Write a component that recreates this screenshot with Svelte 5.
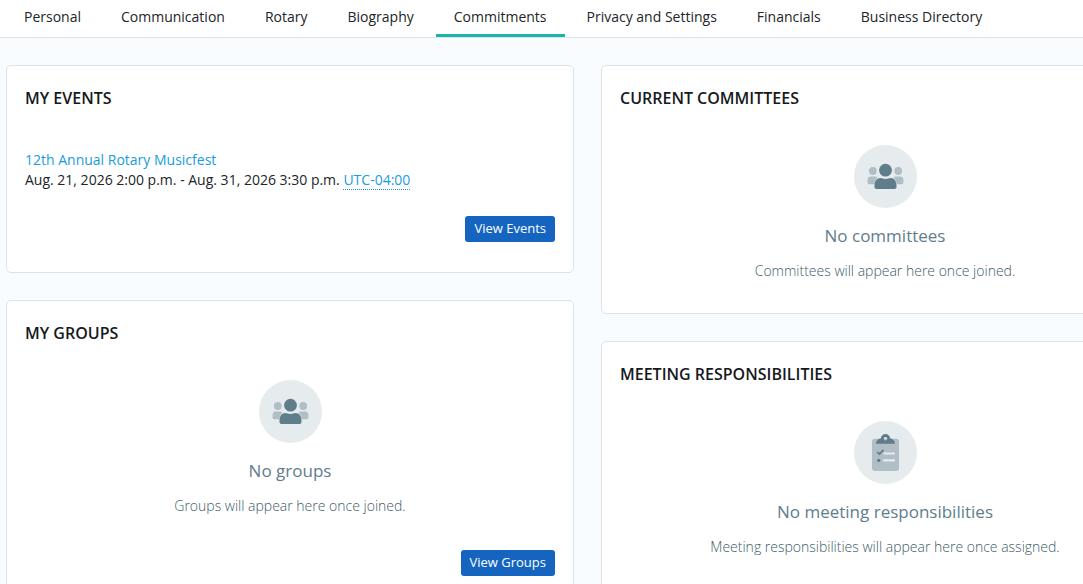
<script>
  const tabs = [
    'Personal',
    'Communication',
    'Rotary',
    'Biography',
    'Commitments',
    'Privacy and Settings',
    'Financials',
    'Business Directory'
  ];

  let activeTab = $state('Commitments');

  const events = [
    {
      id: 1,
      name: '12th Annual Rotary Musicfest',
      dates: 'Aug. 21, 2026 2:00 p.m. - Aug. 31, 2026 3:30 p.m.',
      zone: 'UTC-04:00'
    }
  ];
</script>

{#snippet groupIcon()}
  <svg class="icon" viewBox="0 0 63 63" aria-hidden="true">
    <circle cx="31.5" cy="31.5" r="31.5" fill="#e6ebed" />
    <g fill="#b0bec5">
      <circle cx="18.8" cy="26" r="3.9" />
      <circle cx="44.2" cy="26" r="3.9" />
      <path d="M16.5 31.6h4.6c.9 0 1.7.3 2.4.9-1.7 1.6-2.8 3.9-3.2 6.7h-5.3c-.8 0-1.4-.6-1.4-1.4v-2.7c0-2.1 1-3.5 2.9-3.5z" />
      <path d="M46.5 31.6h-4.6c-.9 0-1.7.3-2.4.9 1.7 1.6 2.8 3.9 3.2 6.7h5.3c.8 0 1.4-.6 1.4-1.4v-2.7c0-2.1-1-3.5-2.9-3.5z" />
    </g>
    <g fill="#607d8b">
      <circle cx="31.5" cy="25.2" r="6.4" />
      <path d="M26.5 33c1.6 0 2.6 1 5 1s3.4-1 5-1c3.9 0 6 3.5 6 7.5v1.5c0 1.200-.8 2-2 2h-18c-1.200 0-2-.8-2-2v-1.500c0-4 2.100-7.500 6-7.500z" />
    </g>
  </svg>
{/snippet}

{#snippet checklistIcon()}
  <svg class="icon" viewBox="0 0 63 63" aria-hidden="true">
    <circle cx="31.5" cy="31.5" r="31.5" fill="#e6ebed" />
    <rect x="18" y="17.8" width="27" height="32.2" rx="3" fill="#b0bec5" />
    <path
      fill="#607d8b"
      fill-rule="evenodd"
      d="M31.5 13c-2.5 0-4.4 1.8-4.6 4.3-2.7.5-4.7 2.4-4.9 5.4h19c-.2-3-2.2-4.9-4.9-5.4-.2-2.500-2.100-4.300-4.600-4.300zm0 3a1.800 1.800 0 1 1 0 3.600 1.800 1.800 0 0 1 0-3.600z"
    />
    <path d="M23.3 31l2.2 2.1 4-4.2" fill="none" stroke="#607d8b" stroke-width="1.8" />
    <circle cx="24.7" cy="39.4" r="1.7" fill="#607d8b" />
    <path d="M30.5 32.5h9.5M30 39.4h10" stroke="#e6ebed" stroke-width="2.2" stroke-linecap="round" />
  </svg>
{/snippet}

{#snippet emptyState(icon, title, text)}
  <div class="empty">
    {@render icon()}
    <p class="empty-title">{title}</p>
    <p class="empty-text">{text}</p>
  </div>
{/snippet}

<div class="page">
  <nav class="tabs">
    {#each tabs as tab}
      <button
        class="tab"
        class:active={tab === activeTab}
        aria-current={tab === activeTab ? 'page' : undefined}
        onclick={() => (activeTab = tab)}
      >{tab}</button>
    {/each}
  </nav>

  <main class="content">
    <div class="column">
      <section class="card">
        <h2>My Events</h2>
        <ul class="events">
          {#each events as event (event.id)}
            <li>
              <a href="#event">{event.name}</a>
              <div>{event.dates} <a class="zone" href="#timezone">{event.zone}</a></div>
            </li>
          {/each}
        </ul>
        <div class="actions">
          <button class="btn">View Events</button>
        </div>
      </section>

      <section class="card">
        <h2>My Groups</h2>
        {@render emptyState(groupIcon, 'No groups', 'Groups will appear here once joined.')}
        <div class="actions">
          <button class="btn">View Groups</button>
        </div>
      </section>
    </div>

    <div class="column">
      <section class="card">
        <h2>Current Committees</h2>
        {@render emptyState(groupIcon, 'No committees', 'Committees will appear here once joined.')}
      </section>

      <section class="card">
        <h2>Meeting Responsibilities</h2>
        {@render emptyState(
          checklistIcon,
          'No meeting responsibilities',
          'Meeting responsibilities will appear here once assigned.'
        )}
      </section>
    </div>
  </main>
</div>

<style>
  :global(body) {
    margin: 0;
    background: #f8fcff;
  }

  .page {
    min-height: 100vh;
    overflow-x: clip;
    font-family: 'Open Sans', sans-serif;
    font-size: 14px;
    line-height: 20px;
    color: #212529;
  }

  button {
    font: inherit;
    cursor: pointer;
  }

  a {
    color: #1a9be0;
    text-decoration: none;
  }

  .tabs {
    display: flex;
    gap: 4px;
    padding: 0 6px;
    background: #fff;
    border-bottom: 1px solid #d9e4ec;
  }

  .tab {
    padding: 7px 18px;
    border: 0;
    border-bottom: 3px solid transparent;
    background: none;
    color: #212529;
    white-space: nowrap;
  }

  .tab.active {
    border-bottom-color: #1ab5a9;
  }

  .content {
    display: grid;
    grid-template-columns: 1fr 1fr;
    align-items: start;
    gap: 27px;
    box-sizing: border-box;
    min-width: 1175px;
    padding: 27px 6px;
  }

  .column {
    display: grid;
    gap: 27px;
  }

  .card {
    padding: 20px 18px 30px;
    background: #fff;
    border: 1px solid #d9e4ec;
    border-radius: 5px;
  }

  h2 {
    margin: 0;
    font-size: 16px;
    font-weight: 600;
    line-height: 24px;
    text-transform: uppercase;
    color: #16191c;
  }

  .events {
    margin: 0;
    padding: 40px 0 26px;
    list-style: none;
  }

  .zone {
    border-bottom: 1px dotted #1a9be0;
  }

  .actions {
    display: flex;
    justify-content: flex-end;
  }

  .btn {
    padding: 2px 9px 4px;
    border: 0;
    border-radius: 3px;
    background: #1565c0;
    color: #fff;
    font-size: 13px;
  }

  .empty {
    display: flex;
    flex-direction: column;
    align-items: center;
    padding-top: 35px;
    color: #607d8b;
    text-align: center;
  }

  .icon {
    width: 63px;
    height: 63px;
  }

  .empty-title {
    margin: 16px 0 0;
    font-size: 17px;
    line-height: 24px;
  }

  .empty-text {
    margin: 13px 0 2px;
    font-weight: 300;
    color: #405c69;
  }

  .empty + .actions {
    margin-top: 32px;
  }
</style>
